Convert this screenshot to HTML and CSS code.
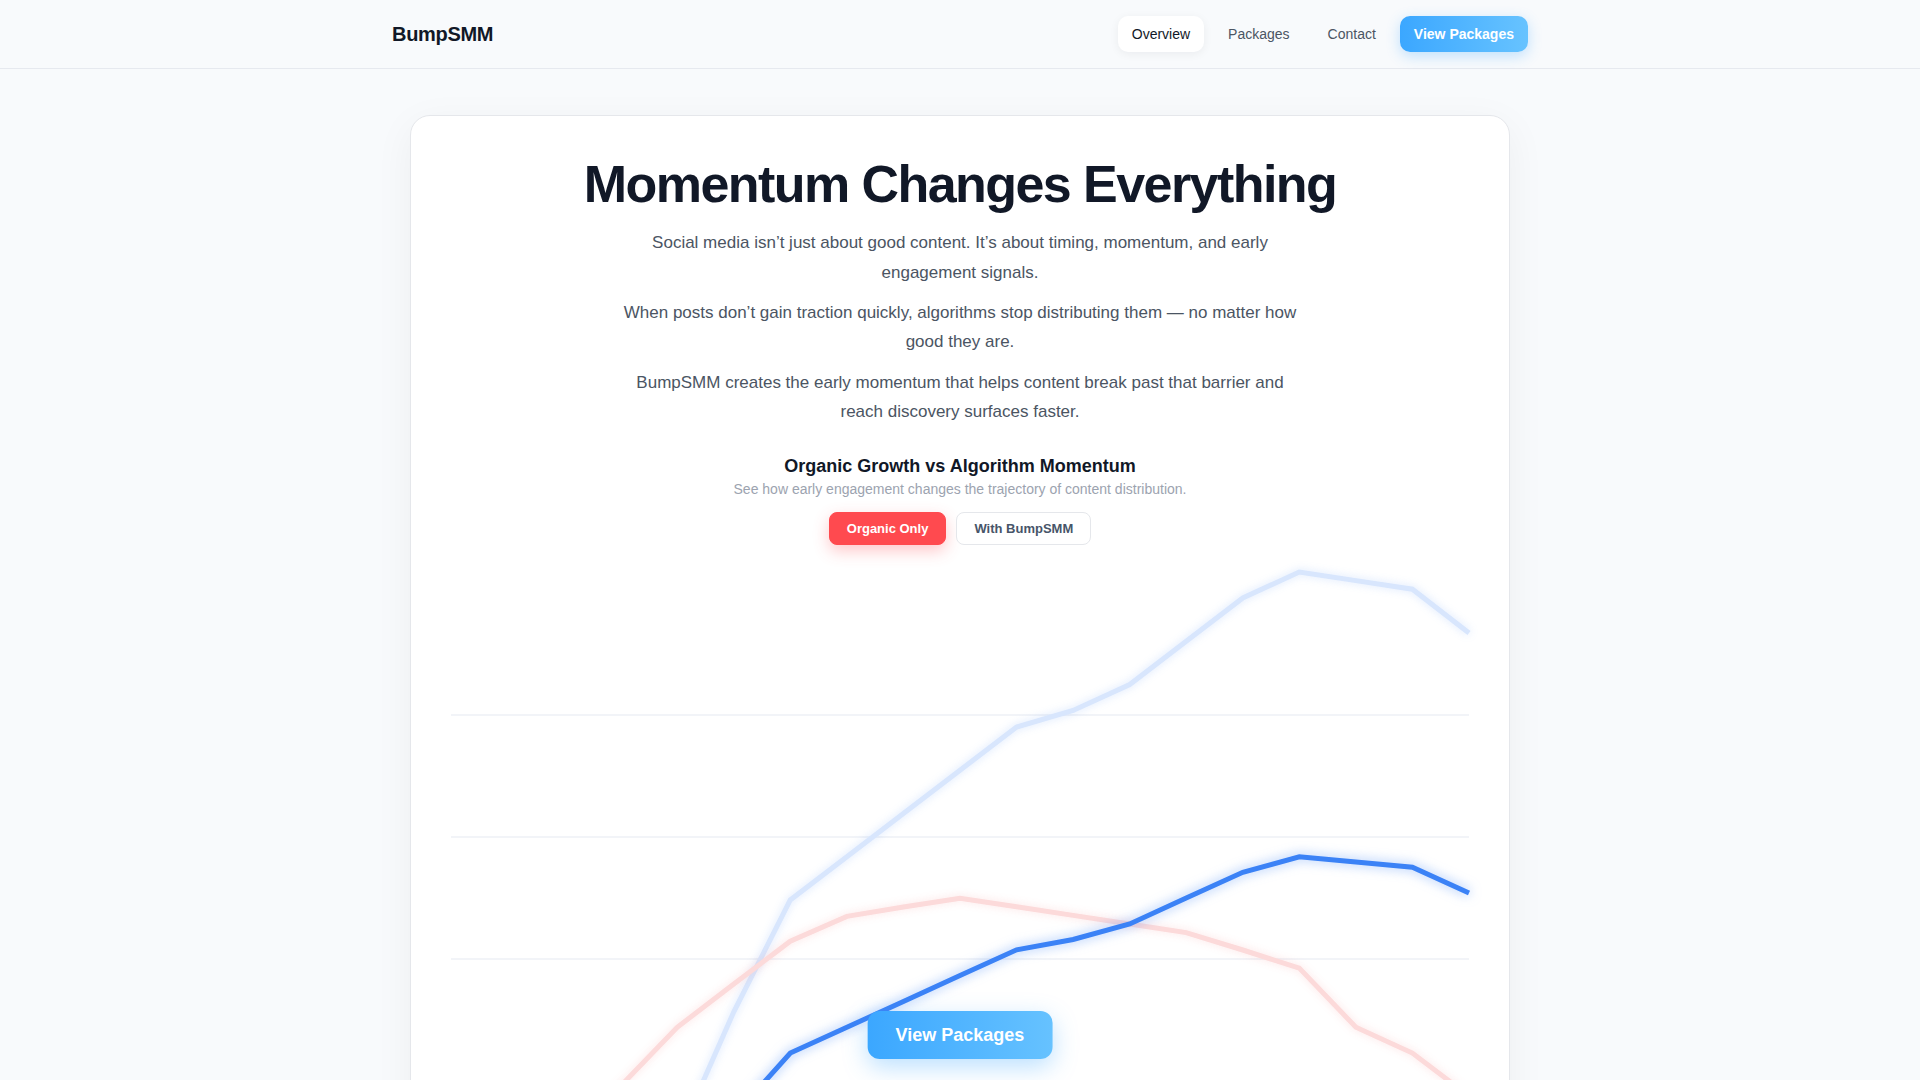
FILE: index.html
```html
<!DOCTYPE html>
<html lang="en">
<head>
<meta charset="utf-8">
<title>BumpSMM</title>
<link rel="stylesheet" href="styles.css">
</head>
<body>
<header class="nav">
  <div class="nav-inner">
    <a class="logo" href="#">BumpSMM</a>
    <nav class="links">
      <a class="link active" href="#">Overview</a>
      <a class="link" href="#">Packages</a>
      <a class="link" href="#">Contact</a>
      <a class="btn-primary" href="#">View Packages</a>
    </nav>
  </div>
</header>
<main class="main">
  <section class="card">
    <h1 class="title">Momentum Changes Everything</h1>
    <p class="lead">Social media isn’t just about good content. It’s about timing, momentum, and early engagement signals.</p>
    <p class="lead">When posts don’t gain traction quickly, algorithms stop distributing them — no matter how good they are.</p>
    <p class="lead">BumpSMM creates the early momentum that helps content break past that barrier and reach discovery surfaces faster.</p>

    <h2 class="chart-title">Organic Growth vs Algorithm Momentum</h2>
    <p class="chart-sub">See how early engagement changes the trajectory of content distribution.</p>
    <div class="toggles">
      <button class="tog on" type="button">Organic Only</button>
      <button class="tog off" type="button">With BumpSMM</button>
    </div>

    <div class="chart">
      <svg class="chart-svg" width="1018" height="620" viewBox="0 0 1018 620">
        <g class="grid">
          <line x1="0" y1="155" x2="1018" y2="155"/>
          <line x1="0" y1="277" x2="1018" y2="277"/>
          <line x1="0" y1="399" x2="1018" y2="399"/>
          <line x1="0" y1="521" x2="1018" y2="521"/>
        </g>
        <polyline class="ln ln-faint-blue" points="0,640 56.6,635 113.1,630 169.7,615 226.2,580 282.8,451.8 339.3,339.9 395.9,296.7 452.4,253.5 509,210.2 565.6,167 622.1,150.5 678.7,124.6 735.2,81.2 791.8,37.9 848.3,12 904.9,20.6 961.4,29.2 1018,73"/>
        <polyline class="ln ln-faint-red" points="0,640 56.6,620 113.1,580 169.7,526 226.2,467.3 282.8,424 339.3,381.2 395.9,356.4 452.4,347 509,338.2 565.6,346.8 622.1,355.4 678.7,364 735.2,372.6 791.8,390 848.3,408.1 904.9,467.3 961.4,493.1 1018,536"/>
        <polyline class="ln ln-blue" points="0,640 56.6,640 113.1,640 169.7,640 226.2,620 282.8,556 339.3,493.1 395.9,467.3 452.4,441.5 509,415.6 565.6,389.8 622.1,379.5 678.7,364 735.2,338 791.8,312.3 848.3,296.8 904.9,302 961.4,307.2 1018,333"/>
      </svg>
      <a class="cta" href="#">View Packages</a>
    </div>
  </section>
</main>
</body>
</html>
```

FILE: styles.css
```css
* { box-sizing: border-box; }

html, body {
  margin: 0;
  padding: 0;
}

body {
  background: #f8fafc;
  font-family: "Liberation Sans", Arial, Helvetica, sans-serif;
  color: #111827;
}

a { text-decoration: none; }

.nav {
  height: 69px;
  background: #f8fafc;
  border-bottom: 1px solid #e6e9ef;
}

.nav-inner {
  max-width: 1200px;
  height: 100%;
  margin: 0 auto;
  padding: 0 32px;
  display: flex;
  align-items: center;
  justify-content: space-between;
}

.logo {
  font-size: 20px;
  font-weight: 700;
  letter-spacing: -0.3px;
  color: #111827;
}

.links {
  display: flex;
  align-items: center;
  gap: 10px;
}

.link {
  padding: 10px 14px;
  font-size: 14px;
  line-height: 16px;
  color: #4b5563;
  border-radius: 10px;
}

.link.active {
  background: #ffffff;
  color: #111827;
  box-shadow: 0 2px 10px rgba(15, 23, 42, 0.06);
}

.btn-primary {
  padding: 10px 14px;
  font-size: 14px;
  line-height: 16px;
  font-weight: 700;
  color: #ffffff;
  border-radius: 10px;
  background: linear-gradient(90deg, #3ba7ff, #67c3ff);
  box-shadow: 0 4px 14px rgba(59, 167, 255, 0.3);
}

.main {
  padding-top: 46px;
}

.card {
  width: 1100px;
  margin: 0 auto;
  background: #ffffff;
  border: 1px solid #e5e7eb;
  border-radius: 20px;
  padding: 40px;
  text-align: center;
  box-shadow: 0 10px 40px rgba(15, 23, 42, 0.05);
}

.title {
  margin: 0 0 15px;
  font-size: 52px;
  line-height: 1.1;
  font-weight: 700;
  letter-spacing: -0.03em;
  color: #111827;
}

.lead {
  max-width: 680px;
  margin: 0 auto 11px;
  font-size: 17px;
  line-height: 29.4px;
  color: #4b5563;
}

.chart-title {
  margin: 28px 0 0;
  font-size: 18px;
  line-height: 23px;
  font-weight: 700;
  color: #111827;
}

.chart-sub {
  margin: 1px 0 0;
  font-size: 14px;
  line-height: 20px;
  color: #9ca3af;
}

.toggles {
  margin-top: 13px;
  display: flex;
  justify-content: center;
  gap: 10px;
}

.tog {
  padding: 7px 17px;
  font-family: inherit;
  font-size: 13px;
  line-height: 17px;
  font-weight: 700;
  border: 1px solid transparent;
  border-radius: 8px;
  cursor: pointer;
}

.tog.on {
  background: #ff4a4f;
  border-color: #ff4a4f;
  color: #ffffff;
  box-shadow: 0 6px 16px rgba(255, 74, 79, 0.3);
}

.tog.off {
  background: #ffffff;
  border-color: #e5e7eb;
  color: #475569;
}

.chart {
  position: relative;
  margin-top: 15px;
  height: 620px;
}

.chart-svg {
  display: block;
  overflow: visible;
}

.grid line {
  stroke: #eef1f6;
  stroke-width: 1.5;
}

.ln {
  fill: none;
  stroke-width: 5;
}

.ln-faint-blue {
  stroke: #d8e6fd;
  filter: drop-shadow(0 0 4px rgba(59, 130, 246, 0.2));
}

.ln-faint-red {
  stroke: #fcdada;
  filter: drop-shadow(0 0 4px rgba(239, 68, 68, 0.15));
}

.ln-blue {
  stroke: #3b82f6;
  filter: drop-shadow(0 0 6px rgba(59, 130, 246, 0.55));
}

.cta {
  position: absolute;
  top: 451px;
  left: 50%;
  transform: translateX(-50%);
  padding: 13px 28px;
  font-size: 18px;
  line-height: 22px;
  font-weight: 700;
  color: #ffffff;
  white-space: nowrap;
  border-radius: 12px;
  background: linear-gradient(90deg, #3ba7ff, #66c2ff);
  box-shadow: 0 8px 24px rgba(59, 167, 255, 0.35);
}
```
